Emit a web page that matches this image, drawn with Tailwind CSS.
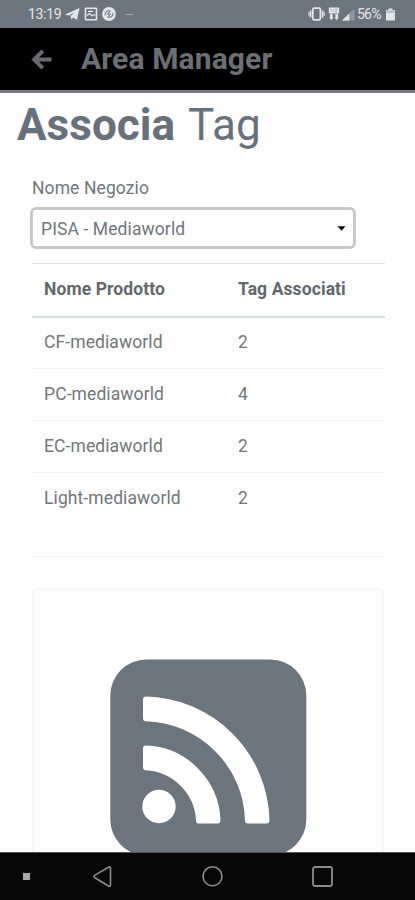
<!DOCTYPE html>
<html lang="it">
<head>
<meta charset="utf-8">
<meta name="viewport" content="width=device-width, initial-scale=1">
<title>Area Manager</title>
<script src="https://cdn.jsdelivr.net/npm/@tailwindcss/browser@4"></script>
</head>
<body class="bg-[#fefefe] font-[Roboto,sans-serif]">
<div class="flex h-[900px] w-[415px] flex-col overflow-hidden text-[#73767a]">
  <div class="flex h-7 shrink-0 items-center bg-[#6c757d] pl-7 pr-5 text-[#e4e6e8]">
    <span class="w-[33px] whitespace-nowrap text-[14px] leading-7 tracking-[-0.3px]">13:19</span>
    <svg class="ml-1 h-[14px] w-[15px]" viewBox="0 0 15 14" fill="currentColor"><path d="M0 7.5 14.5 1 12 13 8.3 10.6 6.3 12.4 5.6 9 10 5 4 8.6z"/></svg>
    <svg class="ml-1 h-[14px] w-[14px]" viewBox="0 0 14 14" fill="none" stroke="currentColor" stroke-width="1.6"><rect x="1.5" y="1.3" width="11" height="11.4" rx=".5"/><path d="M3 8.5 5.5 6.5 8 8.7 11.5 7.5M4 4.3h5" stroke-width="1.3"/></svg>
    <svg class="ml-1 h-[14px] w-[14px]" viewBox="0 0 14 14"><circle cx="7" cy="7" r="6.9" fill="currentColor"/><g fill="none" stroke="#7c848b" stroke-width="1.2"><path d="M3 8.2C3 4 6 3 8 4L5.7 7H9M11 5.8C11 10 8 11 6 10L8.3 7"/></g></svg>
    <span class="ml-[10px] h-px w-[7px] bg-[#a5abb1]"></span>
    <svg class="ml-auto h-[14px] w-[17px]" viewBox="0 0 17 14" fill="none" stroke="currentColor"><rect x="4.8" y="1.2" width="7.6" height="11.6" rx="1.3" stroke-width="1.7"/><path d="M2.6 3.5v7M14.6 3.5v7" stroke-width="1.6"/><path d="M1 5.3v3.4M16.2 5.3v3.4" stroke-width="1.2"/></svg>
    <svg class="ml-[3px] h-[14px] w-[12px]" viewBox="0 0 12 14" fill="currentColor"><path d="M.8.5h10.4v6H.8zM2 7h2.6v3.6h1L3.4 13.3 1.2 10.6H2zM7.4 7H10v3.6h.8L8.6 13.3 6.5 10.6h.9z"/><path d="M3 2v3M5 2v3M7 2h2v1.5H7V5h2" fill="none" stroke="#a8aeb3" stroke-width=".7"/></svg>
    <svg class="ml-[2px] h-[13px] w-[13px]" viewBox="0 0 13 13"><path d="M0 12.5 12.5.5v12z" fill="#959da4"/><path d="M0 12.5 7.5 5.3v7.2z" fill="currentColor"/><path d="M8 5v7.5M10 3v9.5" stroke="#7e868d" stroke-width=".7"/></svg>
    <span class="ml-[2px] w-[25px] whitespace-nowrap text-[14px] leading-7 tracking-[-0.8px]">56%</span>
    <svg class="ml-1 h-[13px] w-[9px]" viewBox="0 0 9 13"><path d="M2.5.5h4V2H9v10.5H0V2h2.5z" fill="currentColor"/><path d="M.5 2.5h8v2.3h-8z" fill="#b3b9be"/></svg>
  </div>

  <header class="flex h-[65px] shrink-0 items-center border-b-[3px] border-[#77797b] bg-black pl-[31px]">
    <svg class="h-[21px] w-[21px]" viewBox="0 0 21 21" fill="none" stroke="#696b6e" stroke-width="4"><path d="M11.8 1.8 3.2 10.5 11.8 19.2M3.5 10.5H20.5"/></svg>
    <h1 class="ml-[29px] whitespace-nowrap pb-px text-[30px] font-bold leading-none tracking-[0.12px] text-[#6c6f73]">Area Manager</h1>
  </header>

  <main class="h-[759px] shrink-0 overflow-hidden">
    <h2 class="ml-[17px] mt-[7px] h-[50px] whitespace-nowrap text-[44px] leading-[51px] tracking-[0.05px] text-[#68717b]"><strong class="font-bold">Associa</strong> <span class="ml-[2px] font-normal">Tag</span></h2>
    <div class="ml-8 mr-[30px]">
      <div class="mt-[25px] h-6 whitespace-nowrap text-[17.5px] leading-[26px] tracking-[0.1px]">Nome Negozio</div>
      <div class="-ml-[2px] mt-2 flex h-[42px] w-[326px] items-center justify-between rounded-[6px] border-[3px] border-[#c9c9c9] pl-2 pr-[7px] text-[17.5px] tracking-[0.1px]">
        <span class="pt-[2px]">PISA - Mediaworld</span>
        <svg class="h-[5px] w-[9px]" viewBox="0 0 9 5"><path d="M.5.3h8L4.5 4.7z" fill="#000"/></svg>
      </div>
      <table class="mt-[14px] w-full table-fixed border-collapse text-left text-[17.5px] leading-6 tracking-[0.1px]">
        <thead><tr class="h-[53px] border-b-2 border-t border-b-[#dcdfe1] border-t-[#dee1e3] text-[#64686c]"><th class="w-[194px] pb-px pl-3 font-bold">Nome Prodotto</th><th class="pb-px pl-3 font-bold">Tag Associati</th></tr></thead>
        <tbody>
          <tr class="h-[52px] border-b border-[#f2f3f4]"><td class="pb-px pl-3">CF-mediaworld</td><td class="pb-px pl-3">2</td></tr>
          <tr class="h-[52px] border-b border-[#f2f3f4]"><td class="pb-[2px] pl-3">PC-mediaworld</td><td class="pb-[2px] pl-3">4</td></tr>
          <tr class="h-[52px] border-b border-[#f2f3f4]"><td class="pb-[2px] pl-3">EC-mediaworld</td><td class="pb-[2px] pl-3">2</td></tr>
          <tr class="h-[52px]"><td class="pb-[2px] pl-3">Light-mediaworld</td><td class="pb-[2px] pl-3">2</td></tr>
        </tbody>
      </table>
      <hr class="mt-[31px] border-[#f3f3f3]">
      <section class="mt-[31px] flex h-[300px] w-[352px] justify-center rounded border-2 border-[#f7f7f7] pt-[69px]">
        <svg class="h-[197px] w-[197px]" viewBox="0 0 197 197"><rect x=".3" y=".5" width="196" height="196" rx="36" fill="#6c757d"/><g fill="#fff" stroke="#fff" stroke-width="6" stroke-linejoin="round"><circle cx="49" cy="147.5" r="13.7"/><path d="M36 89.6A74.5 74.5 0 0 1 107.5 161.5H89A56 56 0 0 0 36 108.3z"/><path d="M36 40.6A123.5 123.5 0 0 1 156.5 161.5H138A105 105 0 0 0 36 59.2z"/></g></svg>
      </section>
    </div>
  </main>

  <nav class="flex h-12 shrink-0 items-center border-t border-[#555] bg-[#070707] pl-[23px]">
    <span class="h-[7px] w-[7px] bg-[#aaa]"></span>
    <svg class="ml-[63px] h-[22px] w-[19px]" viewBox="0 0 19 22" fill="none" stroke="#8c8c8c" stroke-width="1.6" stroke-linejoin="round"><path d="M1.5 9.4Q.7 10.5 1.5 11.5L15.5 20Q17.5 21 17.5 18.5V2.5Q17.5.2 15.5 1.2z"/></svg>
    <svg class="ml-[90px] h-[22px] w-[22px]" viewBox="0 0 22 22" fill="none" stroke="#8c8c8c" stroke-width="1.6"><circle cx="10.5" cy="10.3" r="9.5"/></svg>
    <svg class="ml-[88px] h-[22px] w-[22px]" viewBox="0 0 22 22" fill="none" stroke="#8c8c8c" stroke-width="1.8"><rect x="1" y="1" width="19" height="19" rx="2"/></svg>
  </nav>
</div>
</body>
</html>
